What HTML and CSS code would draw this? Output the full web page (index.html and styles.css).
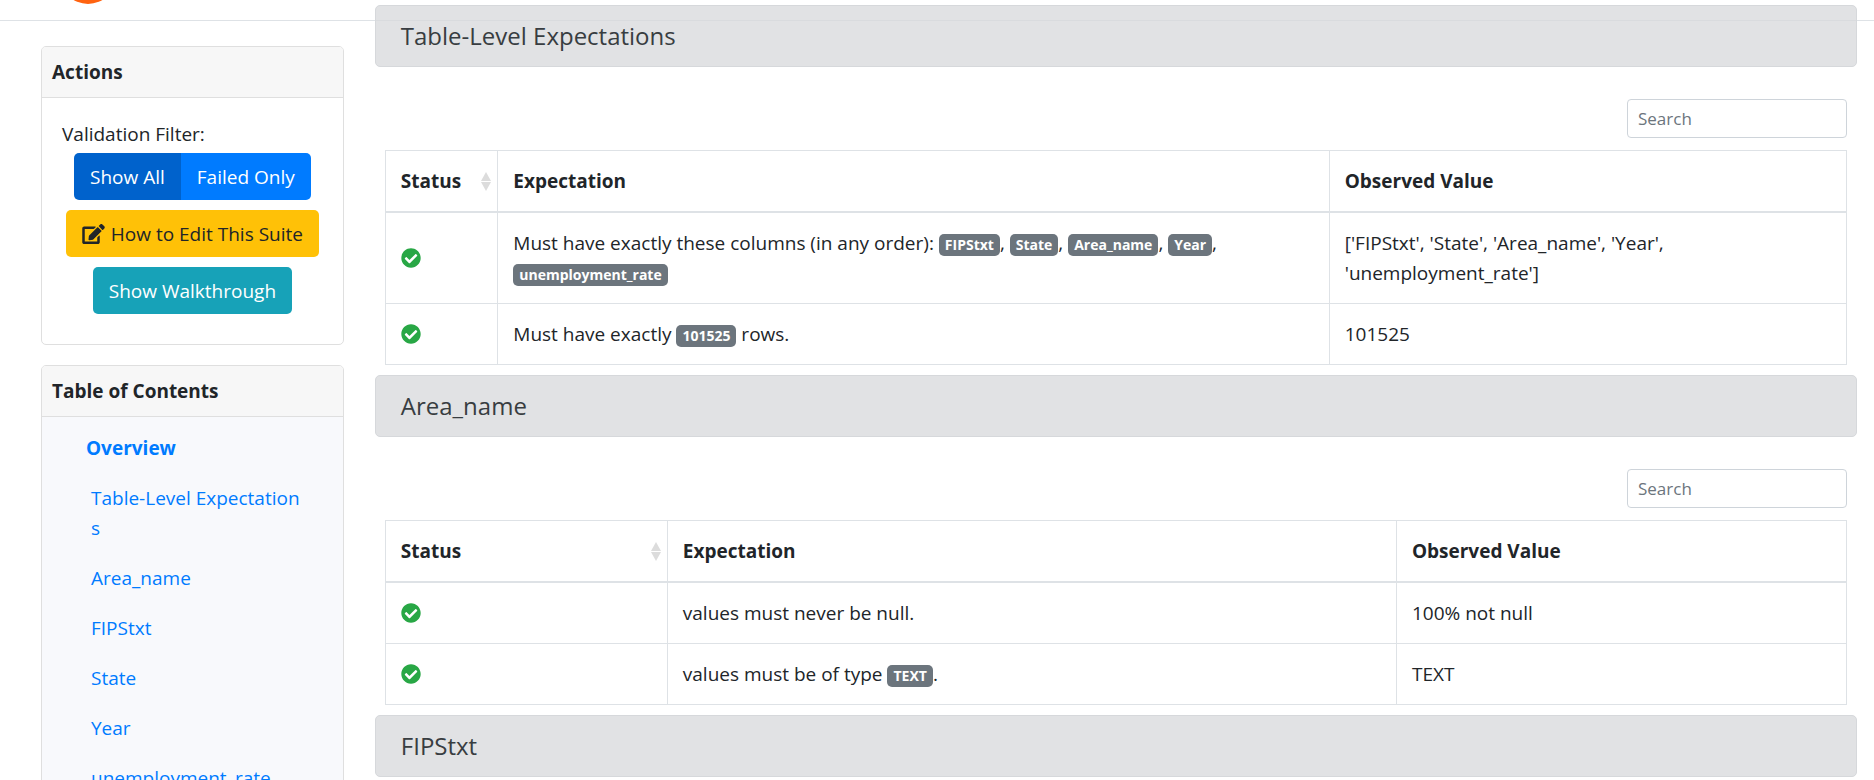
FILE: index.html
```html
<!DOCTYPE html>
<html lang="en">
<head>
<meta charset="utf-8">
<title>Expectation Suite</title>
<link rel="stylesheet" href="styles.css">
</head>
<body>
<svg class="sprite" aria-hidden="true">
  <symbol id="check" viewBox="0 0 512 512"><path d="M504 256c0 137-111 248-248 248S8 393 8 256 119 8 256 8s248 111 248 248zM227.300 387.300l184-184c6.200-6.200 6.200-16.400 0-22.600l-22.600-22.600c-6.200-6.200-16.400-6.200-22.600 0L216 308.100l-70.100-70.100c-6.200-6.200-16.400-6.200-22.600 0l-22.600 22.600c-6.200 6.200-6.200 16.400 0 22.600l104 104c6.200 6.300 16.400 6.300 22.600.1z"/></symbol>
  <symbol id="edit" viewBox="0 0 576 512"><path d="M402.600 83.200l90.200 90.200c3.800 3.800 3.800 10 0 13.800L274.400 405.600l-92.800 10.300c-12.400 1.400-22.900-9.100-21.500-21.500l10.300-92.800L388.800 83.200c3.800-3.800 10-3.800 13.800 0zm162-22.900l-48.800-48.800c-15.200-15.200-39.900-15.200-55.200 0l-35.400 35.400c-3.800 3.800-3.800 10 0 13.800l90.200 90.200c3.800 3.800 10 3.800 13.800 0l35.400-35.400c15.200-15.300 15.200-40 0-55.200zM384 346.200V448H64V128h229.800c3.200 0 6.200-1.300 8.500-3.500l40-40c7.600-7.600 2.200-20.500-8.500-20.500H48C21.500 64 0 85.500 0 112v352c0 26.500 21.500 48 48 48h352c26.500 0 48-21.500 48-48V306.200c0-10.700-12.900-16-20.500-8.500l-40 40c-2.200 2.300-3.500 5.300-3.500 8.500z"/></symbol>
  <symbol id="sort" viewBox="0 0 10 19"><path d="M5 0l5 9H0zM5 19l5-9H0z"/></symbol>
</svg>
<header class="topbar">
  <svg class="logo" viewBox="0 0 56 56" aria-hidden="true"><circle cx="28" cy="28" r="28"/></svg>
</header>
<div class="layout">
  <aside class="sidebar">
    <section class="card">
      <h2 class="card-header">Actions</h2>
      <div class="actions">
        <p class="filter-label" id="filter-label">Validation Filter:</p>
        <div class="btn-group" role="group" aria-labelledby="filter-label">
          <button type="button" class="btn btn-primary active">Show All</button>
          <button type="button" class="btn btn-primary">Failed Only</button>
        </div>
        <button type="button" class="btn btn-warning"><svg class="edit-icon" aria-hidden="true"><use href="#edit"/></svg>How to Edit This Suite</button>
        <button type="button" class="btn btn-info">Show Walkthrough</button>
      </div>
    </section>
    <section class="card">
      <h2 class="card-header">Table of Contents</h2>
      <nav class="toc">
        <a class="toc-top" href="#">Overview</a>
        <a href="#table-level">Table-Level Expectations</a>
        <a href="#area-name">Area_name</a>
        <a href="#fipstxt">FIPStxt</a>
        <a href="#">State</a>
        <a href="#">Year</a>
        <a href="#">unemployment_rate</a>
      </nav>
    </section>
  </aside>
  <main class="content">
    <section id="table-level">
      <h2 class="section-title">Table-Level Expectations</h2>
      <div class="section-body">
        <input class="search" type="search" placeholder="Search" aria-label="Search table-level expectations">
        <table>
          <colgroup><col class="status-narrow"><col class="expect-wide"><col></colgroup>
          <thead><tr>
            <th scope="col"><div class="sortable">Status<svg class="sort-icon" aria-hidden="true"><use href="#sort"/></svg></div></th>
            <th scope="col">Expectation</th>
            <th scope="col">Observed Value</th>
          </tr></thead>
          <tbody>
            <tr>
              <td><svg class="check-icon" role="img" aria-label="Passed"><use href="#check"/></svg></td>
              <td>Must have exactly these columns (in any order): <span class="badge">FIPStxt</span>, <span class="badge">State</span>, <span class="badge">Area_name</span>, <span class="badge">Year</span>,<br><span class="badge">unemployment_rate</span></td>
              <td>['FIPStxt', 'State', 'Area_name', 'Year',<br>'unemployment_rate']</td>
            </tr>
            <tr>
              <td><svg class="check-icon" role="img" aria-label="Passed"><use href="#check"/></svg></td>
              <td>Must have exactly <span class="badge">101525</span> rows.</td>
              <td>101525</td>
            </tr>
          </tbody>
        </table>
      </div>
    </section>
    <section id="area-name">
      <h2 class="section-title">Area_name</h2>
      <div class="section-body">
        <input class="search" type="search" placeholder="Search" aria-label="Search Area_name expectations">
        <table>
          <colgroup><col class="status-wide"><col class="expect-narrow"><col></colgroup>
          <thead><tr>
            <th scope="col"><div class="sortable">Status<svg class="sort-icon" aria-hidden="true"><use href="#sort"/></svg></div></th>
            <th scope="col">Expectation</th>
            <th scope="col">Observed Value</th>
          </tr></thead>
          <tbody>
            <tr>
              <td><svg class="check-icon" role="img" aria-label="Passed"><use href="#check"/></svg></td>
              <td>values must never be null.</td>
              <td>100% not null</td>
            </tr>
            <tr>
              <td><svg class="check-icon" role="img" aria-label="Passed"><use href="#check"/></svg></td>
              <td>values must be of type <span class="badge">TEXT</span>.</td>
              <td>TEXT</td>
            </tr>
          </tbody>
        </table>
      </div>
    </section>
    <section id="fipstxt">
      <h2 class="section-title">FIPStxt</h2>
    </section>
  </main>
</div>
</body>
</html>
```
FILE: styles.css
```css
*, *::before, *::after { box-sizing: border-box; }

body {
  margin: 0;
  height: 100vh;
  overflow: hidden;
  background: #fff;
  color: #212529;
  font-family: "Open Sans", "Noto Sans", sans-serif;
  font-size: 19px;
  line-height: 30px;
}

h2, p { margin: 0; }

a { color: #007bff; text-decoration: none; }

.sprite { position: absolute; width: 0; height: 0; }

/* Top bar, scrolled almost out of view */
.topbar {
  display: flex;
  align-items: flex-end;
  height: 21px;
  padding: 0 60px 16px;
  border-bottom: 1px solid #dee2e6;
  overflow: hidden;
}

.logo { flex: none; width: 56px; height: 56px; fill: #ff6310; }

.layout { display: flex; align-items: flex-start; }

/* Sidebar */
.sidebar {
  flex: 0 0 20%;
  display: flex;
  flex-direction: column;
  gap: 20px;
  padding: 25px 31px 0 41px;
}

.card {
  border: 1px solid #dfdfdf;
  border-radius: 5px;
  overflow: hidden;
}

.card-header {
  padding: 10px;
  border-bottom: 1px solid #dfdfdf;
  background: #f7f7f7;
  font-size: 19px;
  font-weight: 700;
  line-height: 30px;
}

.actions {
  display: flex;
  flex-direction: column;
  align-items: center;
  gap: 10px;
  padding: 21px 20px 30px;
}

.filter-label { align-self: stretch; margin-bottom: -6px; }

.btn-group { display: flex; }

.btn {
  display: flex;
  align-items: center;
  height: 47px;
  padding: 0 16px;
  border: 0;
  border-radius: 5px;
  font: inherit;
  white-space: nowrap;
}

.btn-primary { background: #007bff; color: #fff; }
.btn-primary.active { background: #0062cc; }
.btn-group .btn:first-child { border-radius: 5px 0 0 5px; }
.btn-group .btn:last-child { border-radius: 0 5px 5px 0; }
.btn-warning { gap: 6px; background: #ffc107; color: #212529; }
.btn-info { background: #17a2b8; color: #fff; }

.edit-icon { width: 23px; height: 20px; fill: currentColor; }

.toc {
  display: flex;
  flex-direction: column;
  gap: 20px;
  padding: 16px 40px 20px 49px;
  background: #f8f9fc;
  word-break: break-all;
}

.toc-top { margin-left: -5px; font-weight: 700; }

/* Main column; overlaps the top bar's rule */
.content {
  flex: 1;
  min-width: 0;
  margin-top: -16px;
  padding-right: 17px;
}

.section-title {
  padding: 15px 25px;
  border: 1px solid #d6d8db;
  border-radius: 5px;
  background: rgba(214, 216, 219, 0.74);
  color: #383d41;
  font-size: 24px;
  font-weight: 500;
  line-height: 30px;
}

.section-body {
  display: flex;
  flex-direction: column;
  gap: 12px;
  padding: 32px 10px 10px;
}

.search {
  align-self: flex-end;
  width: 220px;
  height: 39px;
  padding: 0 10px;
  border: 1px solid #ced4da;
  border-radius: 4px;
  background: #fff;
  font: inherit;
  font-size: 17px;
  appearance: none;
}

.search::placeholder { color: #6c757d; opacity: 1; }

table {
  width: 100%;
  border-collapse: collapse;
  table-layout: fixed;
}

th, td {
  padding: 15px;
  border: 1px solid #dee2e6;
  text-align: left;
  vertical-align: middle;
}

thead th { border-bottom-width: 2px; }

.status-narrow { width: 7.7%; }
.expect-wide { width: 56.9%; }
.status-wide { width: 19.3%; }
.expect-narrow { width: 49.9%; }

.sortable {
  display: flex;
  align-items: center;
  justify-content: space-between;
  margin-right: -9px;
}

.sort-icon { width: 10px; height: 19px; fill: #dcdcdc; }

.check-icon {
  display: block;
  width: 20px;
  height: 20px;
  fill: #28a745;
}

.badge {
  display: inline-block;
  padding: 4px 6px;
  border-radius: 5px;
  background: #6c757d;
  color: #fff;
  font-size: 14px;
  font-weight: 700;
  line-height: 14px;
  vertical-align: baseline;
}
```
